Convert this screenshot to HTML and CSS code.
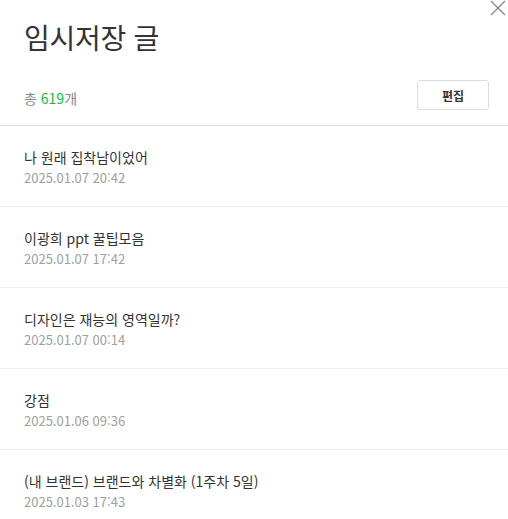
FILE: index.html
```html
<!DOCTYPE html>
<html lang="ko">
<head>
<meta charset="utf-8">
<link rel="stylesheet" href="styles.css">
</head>
<body>
<div class="panel">
  <button class="close" aria-label="닫기">
    <svg width="16" height="16" viewBox="0 0 16 16"><path d="M1 1L15 15M15 1L1 15" stroke="#8a8a8a" stroke-width="1.4" fill="none"/></svg>
  </button>
  <header class="head">
    <h1 class="title">임시저장 글</h1>
    <div class="bar">
      <span class="count">총 <em>619</em>개</span>
      <button class="edit">편집</button>
    </div>
  </header>
  <ul class="list">
    <li class="item"><p class="name">나 원래 집착남이었어</p><p class="date">2025.01.07 20:42</p></li>
    <li class="item"><p class="name">이광희 ppt 꿀팁모음</p><p class="date">2025.01.07 17:42</p></li>
    <li class="item"><p class="name">디자인은 재능의 영역일까?</p><p class="date">2025.01.07 00:14</p></li>
    <li class="item"><p class="name">강점</p><p class="date">2025.01.06 09:36</p></li>
    <li class="item"><p class="name">(내 브랜드) 브랜드와 차별화 (1주차 5일)</p><p class="date">2025.01.03 17:43</p></li>
  </ul>
</div>
</body>
</html>
```

FILE: styles.css
```css
* { box-sizing: border-box; }
html, body { margin: 0; padding: 0; background: #fff; overflow: hidden; }
body { font-family: "Noto Sans CJK KR", "Noto Sans", sans-serif; color: #333; }
.panel { position: relative; width: 508px; }
.close {
  position: absolute; top: 0; right: 2px;
  width: 16px; height: 16px; padding: 0; border: 0; background: none;
  display: block;
}
.close svg { display: block; }
.head { padding: 17px 19px 0 24px; border-bottom: 1px solid #ddd; }
.title { margin: 0; font-size: 28px; line-height: 40px; font-weight: 400; color: #333; letter-spacing: -0.3px; }
.bar { display: flex; justify-content: space-between; align-items: center; margin-top: 23px; height: 30px; margin-bottom: 15px; }
.count { font-size: 14px; color: #888; line-height: 18px; padding-top: 6px; }
.count em { font-style: normal; color: #00c73c; }
.edit {
  width: 72px; height: 30px; border: 1px solid #ddd; border-radius: 3px; background: #fff;
  font-family: inherit; font-size: 12px; font-weight: 700; color: #333; padding: 0;
}
.list { list-style: none; margin: 0; padding: 0; }
.item { padding: 21px 24px 19px; border-bottom: 1px solid #eee; height: 81px; }
.name { margin: 0; font-size: 14px; line-height: 20px; color: #333; }
.date { margin: 2px 0 0; font-size: 13px; line-height: 18px; color: #a0a0a0; }
```
